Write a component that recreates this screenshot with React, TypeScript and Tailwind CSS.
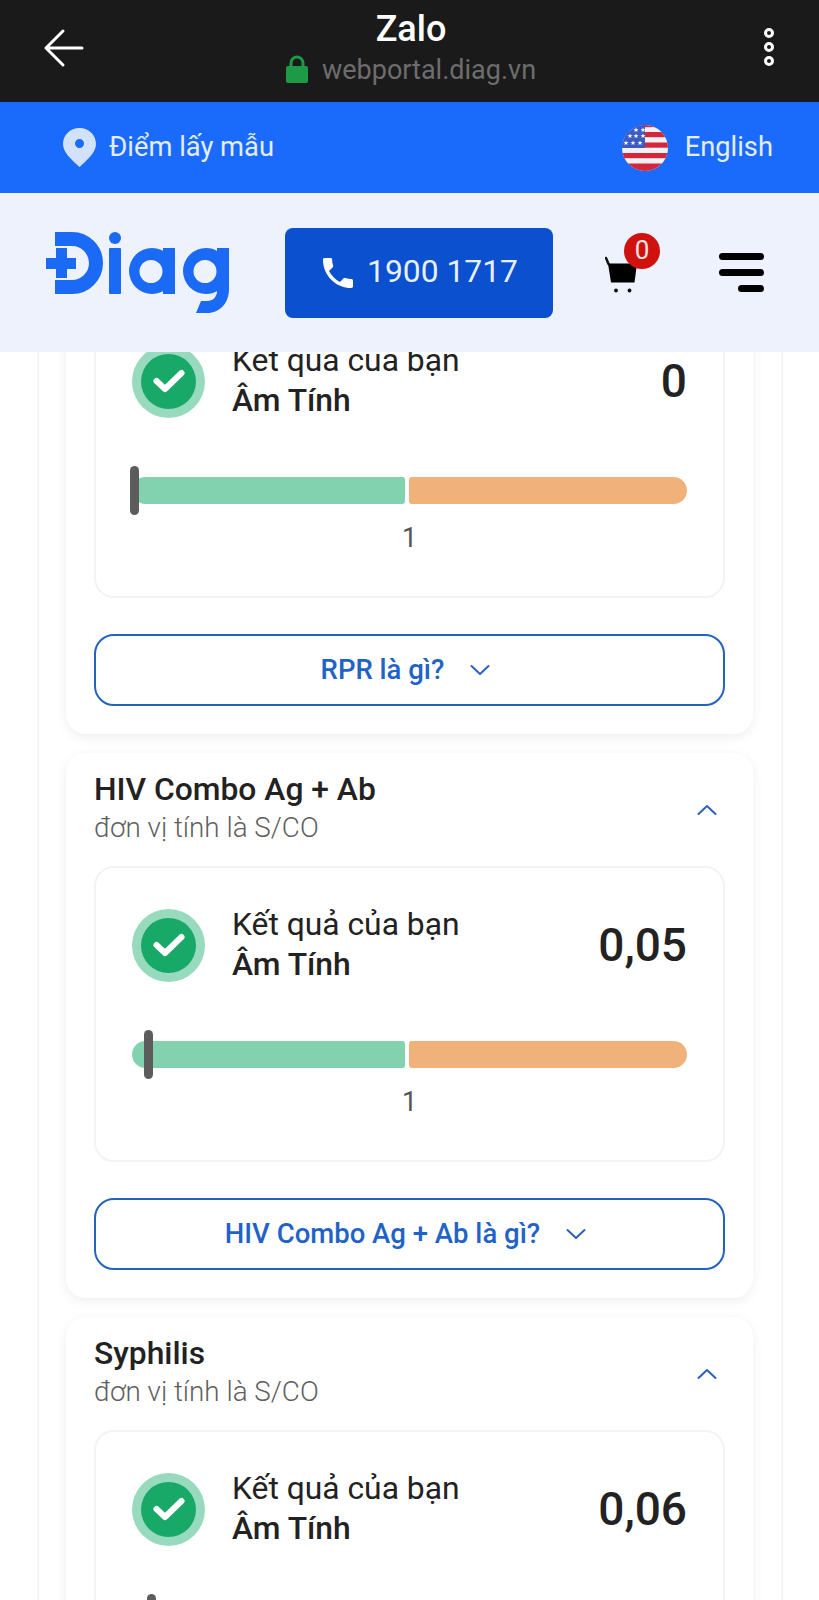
import React from "react";

function Logo() {
  return (
    <svg width="190" height="86" viewBox="44 230 190 86" fill="#1a6af5" className="shrink-0">
      <path d="M55 239 H72 A24 24 0 0 1 72 287 H55" fill="none" stroke="#1a6af5" strokeWidth="14" />
      <path d="M56 248 H67 V258 H76 V269 H67 V278 H56 V269 H46 V258 H56 Z" />
      <rect x="109" y="248" width="12" height="46" rx="1" />
      <circle cx="115" cy="238" r="6" />
      <path fillRule="evenodd" d="M152 248 A23 23 0 1 0 152.010 294 A23 23 0 1 0 152 248 Z M151 260 A11.500 11.500 0 1 1 150.990 283 A11.500 11.500 0 1 1 151 260 Z" />
      <rect x="163" y="248" width="12" height="46" />
      <path fillRule="evenodd" d="M206 248 C211 248 214 249 217 251 V248 H229 V289 C229 303 220 313 207 313 H196 L201 301 H207 C213 301 217 297 217 291 C214 293 211 294 206 294 A23 23 0 1 1 206 248 Z M205 260 A11.500 11.500 0 1 0 205.010 283 A11.500 11.500 0 1 0 205 260 Z" />
    </svg>
  );
}

function Star({ x, y }: { x: number; y: number }) {
  const pts = "0,-2.600 0.700,-0.800 2.500,-0.800 1.100,0.300 1.600,2.100 0,1 -1.600,2.100 -1.100,0.300 -2.500,-0.800 -0.700,-0.800";
  return <polygon points={pts} fill="#ffffff" transform={`translate(${x} ${y})`} />;
}

function Flag() {
  const reds = [-3, 7, 17.500, 28, 38.500];
  const stars = [[14, 5], [21, 5], [8, 11], [14, 11], [21, 11], [4, 18], [11, 18], [18, 18]];
  return (
    <svg width="46" height="46" viewBox="0 0 46 46">
      <defs>
        <clipPath id="flagClip">
          <circle cx="23" cy="23" r="23" />
        </clipPath>
      </defs>
      <g clipPath="url(#flagClip)">
        <rect width="46" height="46" fill="#f3f1f3" />
        {reds.map((y) => (
          <rect key={y} x="0" y={y} width="46" height={y > 38 ? 8 : 5.200} fill="#d3283c" />
        ))}
        <rect x="0" y="0" width="23" height="23" fill="#3a5cc4" />
        {stars.map(([x, y]) => (
          <Star key={`${x}-${y}`} x={x} y={y} />
        ))}
      </g>
    </svg>
  );
}

function StatusIcon() {
  return (
    <div className="w-[73px] h-[73px] rounded-full bg-[#98dabd] flex items-center justify-center shrink-0">
      <div className="w-[55px] h-[55px] rounded-full bg-[#18a868] flex items-center justify-center">
        <svg width="34" height="28" viewBox="0 0 34 28" fill="none">
          <path d="M4.500 14 L13 22 L29.500 6" stroke="#ffffff" strokeWidth="6" strokeLinecap="round" strokeLinejoin="round" />
        </svg>
      </div>
    </div>
  );
}

function Chevron({ up }: { up?: boolean }) {
  return (
    <svg width="20" height="12" viewBox="0 0 20 12" fill="none">
      <path d={up ? "M1.500 10 L10 2 L18.500 10" : "M1.500 2 L10 10 L18.500 2"} stroke="#2a62bd" strokeWidth="2" strokeLinecap="round" strokeLinejoin="round" />
    </svg>
  );
}

function Card({ title, value, button, marker }: { title: string; value: string; button: string; marker: string }) {
  return (
    <section className="bg-white rounded-[20px] shadow-[0_3px_12px_rgba(0,0,0,0.07)] px-7 h-[545px] flex flex-col">
      <div className="flex items-center justify-between h-[113px]">
        <div className="-mt-[2px]">
          <h2 className="text-[31.800px] leading-[38px] font-medium text-[#222222]">{title}</h2>
          <p className="text-[27.800px] leading-[40px] font-light text-[#5f5f5f]">đơn vị tính là S/CO</p>
        </div>
        <span className="mr-[8px]">
          <Chevron up />
        </span>
      </div>
      <div className="h-[296px] rounded-[20px] border-2 border-[#f3f3f3] px-[36px] pt-[37px]">
        <div className="flex items-center h-[80px]">
          <StatusIcon />
          <div className="ml-[27px] -mt-[3px] flex-1 text-[31.800px] leading-[40px] text-[#222222]">
            <p>Kết quả của bạn</p>
            <p className="font-medium">Âm Tính</p>
          </div>
          <span className="text-[46px] leading-none font-medium text-[#222222]">{value}</span>
        </div>
        <div className="relative mt-[56px] flex gap-1 h-[27px]">
          <div className="w-[273px] bg-[#82d2b0] rounded-l-[14px] rounded-r-[3px]" />
          <div className="flex-1 bg-[#f0b27a] rounded-r-[14px] rounded-l-[3px]" />
          <div className={`absolute -top-[11px] h-[49px] w-[9px] rounded-full bg-[#5c5c5c] ${marker}`} />
        </div>
        <p className="mt-[17px] text-center text-[27px] leading-[34px] text-[#555555]">1</p>
      </div>
      <div className="mt-[36px] h-[72px] pr-2 rounded-[20px] border-2 border-[#2463bd] flex items-center justify-center gap-[26px]">
        <span className="text-[27.500px] font-medium text-[#1f63c8]">{button}</span>
        <Chevron />
      </div>
    </section>
  );
}

export default function App() {
  return (
    <div className="w-[819px] h-[1600px] overflow-hidden flex flex-col bg-white font-['Roboto',sans-serif]">
      <header className="h-[102px] bg-[#1a1a1a] shrink-0 flex items-start justify-between">
        <svg className="ml-[42px] mt-[27px]" width="44" height="42" viewBox="0 0 44 42" fill="none">
          <path d="M40 21 H4 M21 4 L4 21 L21 38" stroke="#ffffff" strokeWidth="3" strokeLinecap="round" strokeLinejoin="round" />
        </svg>
        <div className="flex flex-col items-center pt-[7px] mr-[23px]">
          <div className="text-[36px] leading-[44px] font-medium text-white">Zalo</div>
          <div className="flex items-center gap-[14px] mt-[1px]">
            <svg width="22" height="28" viewBox="0 0 22 28">
              <path d="M5 13 V8 A6 6 0 0 1 17 8 V13" fill="none" stroke="#1e9a46" strokeWidth="3" />
              <rect x="0" y="11" width="22" height="17" rx="2" fill="#1e9a46" />
            </svg>
            <span className="text-[27px] leading-[32px] pt-[2px] text-[#6d6d6d]">webportal.diag.vn</span>
          </div>
        </div>
        <svg className="mr-[40px] mt-[25px]" width="20" height="44" viewBox="0 0 20 44" fill="none" stroke="#ffffff" strokeWidth="3">
          <circle cx="10" cy="8" r="3.500" />
          <circle cx="10" cy="22" r="3.500" />
          <circle cx="10" cy="36" r="3.500" />
        </svg>
      </header>

      <div className="h-[91px] bg-[#1a6bfb] shrink-0 flex items-center justify-between pl-[63px] pr-[46px] text-[27.300px] text-[#e3edfd]">
        <div className="flex items-center gap-[13px]">
          <svg width="33" height="39" viewBox="0 0 33 39">
            <path fillRule="evenodd" fill="#d2e2fd" d="M16.500 0 C26 0 33 7 33 16 C33 23 27 29 22 34 L16.500 39 L11 34 C6 29 0 23 0 16 C0 7 7 0 16.500 0 Z M16.500 11 A4.500 4.500 0 1 0 16.510 20 A4.500 4.500 0 1 0 16.500 11 Z" />
          </svg>
          <span>Điểm lấy mẫu</span>
        </div>
        <div className="flex items-center gap-[17px]">
          <Flag />
          <span>English</span>
        </div>
      </div>

      <div className="h-[159px] bg-[#edf2fd] shrink-0 flex items-center pl-[44px] relative z-10">
        <Logo />
        <div className="ml-[51px] w-[268px] h-[90px] shrink-0 rounded-[8px] bg-[#0a50cf] flex items-center justify-center gap-[9px] pr-[2px] text-[31.800px] text-[#e9f0fd]">
          <svg width="40" height="40" viewBox="0 0 24 24" fill="#ffffff">
            <path d="M6.600 10.800 c1.400 2.800 3.800 5.100 6.600 6.600 l2.200-2.200 c.300-.300.700-.400 1-.200 1.100.400 2.300.600 3.600.600 .600 0 1 .400 1 1 V20 c0 .600-.400 1-1 1 C10.600 21 3 13.400 3 4 c0-.600.400-1 1-1 h3.500 c.600 0 1 .400 1 1 0 1.300.200 2.500.600 3.600 .100.300 0 .700-.200 1 z" />
          </svg>
          <span className="-mt-[2px]">1900 1717</span>
        </div>
        <div className="relative w-[56px] h-[60px] ml-[52px] shrink-0">
          <svg className="absolute left-0 top-[13px]" width="36" height="40" viewBox="0 0 36 40">
            <path d="M1 2 L3.500 8" stroke="#111111" strokeWidth="2.500" strokeLinecap="round" fill="none" />
            <path d="M3 7.500 H32 L29.500 26.500 H6 Z" fill="#000000" />
            <circle cx="11" cy="34.500" r="1.900" fill="#111111" />
            <circle cx="24.500" cy="34.500" r="1.900" fill="#111111" />
          </svg>
          <div className="absolute left-[19px] top-[-10px] w-9 h-9 rounded-full bg-[#d0120f] flex items-center justify-center text-[26px] text-[#f4e3e3]">0</div>
        </div>
        <div className="flex flex-col items-end gap-[9px] w-[45px] ml-[58px] shrink-0">
          <div className="h-[7px] w-full rounded-full bg-black" />
          <div className="h-[7px] w-full rounded-full bg-black" />
          <div className="h-[7px] w-[26px] rounded-full bg-black" />
        </div>
      </div>

      <main className="flex-1 overflow-hidden ml-[37px] mr-[36px] border-x-2 border-[#f5f5f5]">
        <div className="-mt-[163px] pl-[27px] pr-[28px] flex flex-col gap-[19px]">
          <Card title="RPR" value="0" button="RPR là gì?" marker="-left-[2px]" />
          <Card title="HIV Combo Ag + Ab" value="0,05" button="HIV Combo Ag + Ab là gì?" marker="left-[12px]" />
          <Card title="Syphilis" value="0,06" button="Syphilis là gì?" marker="left-[15px]" />
        </div>
      </main>
    </div>
  );
}
